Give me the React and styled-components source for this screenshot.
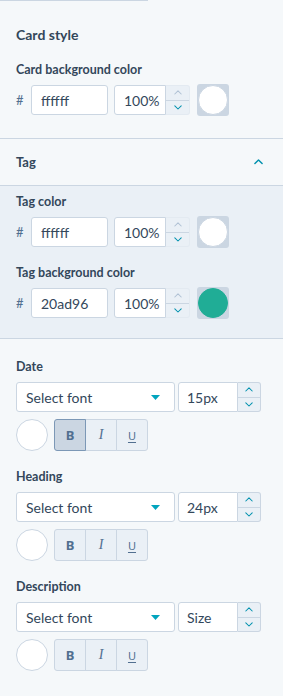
import React from "react";
import styled, { createGlobalStyle, css } from "styled-components";

const Global = createGlobalStyle`
  html, body { margin: 0; padding: 0; background: #f5f8fa; }
  body { font-family: Lato, "Noto Sans", sans-serif; color: #33475b; }
  * { box-sizing: border-box; }
`;

const Panel = styled.div`
  width: 283px;
  min-height: 696px;
  background: #f5f8fa;
  display: flex;
  flex-direction: column;
`;

const TopRule = styled.div`
  width: 148px;
  height: 1px;
  background: #cbd6e2;
`;

const Section = styled.section`
  display: flex;
  flex-direction: column;
  padding: ${(p) => p.$pad};
  background: ${(p) => (p.$tinted ? "#eaf0f6" : "#f5f8fa")};
  border-bottom: ${(p) => (p.$border ? "1px solid #cbd6e2" : "none")};
  gap: ${(p) => p.$gap || "18px"};
`;

const SectionTitle = styled.h2`
  margin: 0;
  font-size: 14px;
  line-height: 20px;
  font-weight: 700;
`;

const AccordionHeader = styled.div`
  height: 47px;
  padding: 0 20px 0 16px;
  display: flex;
  align-items: center;
  justify-content: space-between;
  border-bottom: 1px solid #cbd6e2;
  font-size: 13px;
  font-weight: 700;
`;

const Field = styled.div`
  display: flex;
  flex-direction: column;
  gap: ${(p) => p.$gap || "7px"};
`;

const Label = styled.div`
  font-size: 12.5px;
  line-height: 16px;
  font-weight: 700;
`;

const ColorRow = styled.div`
  display: flex;
  align-items: center;
  height: 30px;
`;

const Hash = styled.span`
  width: 15px;
  font-size: 13px;
  color: #516f90;
`;

const TextBox = styled.div`
  height: ${(p) => p.$h || "30px"};
  width: ${(p) => p.$w};
  background: #fff;
  border: 1px solid #cbd6e2;
  border-radius: 3px;
  display: flex;
  align-items: center;
  padding-left: ${(p) => p.$pl || "9px"};
  font-size: 14px;
  color: #33475b;
  margin-right: ${(p) => p.$mr || "0"};
  ${(p) =>
    p.$joined &&
    css`
      border-top-right-radius: 0;
      border-bottom-right-radius: 0;
    `}
`;

const Spinner = styled.div`
  width: ${(p) => p.$w || "24px"};
  height: ${(p) => p.$h || "30px"};
  display: flex;
  flex-direction: column;
  background: #eaf0f6;
  border: 1px solid ${(p) => (p.$framed ? "#cbd6e2" : "#e3eaf1")};
  border-left: none;
  border-radius: 0 3px 3px 0;
  margin-right: ${(p) => p.$mr || "0"};
`;

const SpinHalf = styled.div`
  flex: 1;
  display: flex;
  align-items: center;
  justify-content: center;
  & + & {
    border-top: 1px solid #cbd6e2;
  }
`;

const Swatch = styled.div`
  width: 32px;
  height: 32px;
  border-radius: 3px;
  background: #cbd6e2;
  display: flex;
  align-items: center;
  justify-content: center;
`;

const Dot = styled.div`
  width: ${(p) => p.$size || "30px"};
  height: ${(p) => p.$size || "30px"};
  border-radius: 50%;
  background: ${(p) => p.$color};
  border: 1px solid ${(p) => (p.$color === "#fff" ? "#cbd6e2" : p.$color)};
`;

const FontRow = styled.div`
  display: flex;
  align-items: center;
  height: 30px;
`;

const Select = styled.div`
  width: 159px;
  height: 30px;
  background: #fff;
  border: 1px solid #cbd6e2;
  border-radius: 3px;
  display: flex;
  align-items: center;
  justify-content: space-between;
  padding: 0 14px 0 9px;
  font-size: 14px;
  margin-right: 3px;
`;

const StyleRow = styled.div`
  display: flex;
  align-items: center;
  gap: 6px;
`;

const BtnGroup = styled.div`
  display: flex;
`;

const StyleBtn = styled.div`
  width: 32px;
  height: 32px;
  display: flex;
  align-items: center;
  justify-content: center;
  background: ${(p) => (p.$active ? "#cbd6e2" : "#eaf0f6")};
  border: 1px solid ${(p) => (p.$active ? "#7c98b6" : "#cbd6e2")};
  color: #516f90;
  font-size: 12px;
  &:first-child { border-radius: 3px 0 0 3px; }
  &:last-child { border-radius: 0 3px 3px 0; }
  & + & { margin-left: -1px; }
  ${(p) =>
    p.$active &&
    css`
      position: relative;
      z-index: 1;
    `}
`;

const BoldGlyph = styled.span`
  font-family: "Noto Sans", sans-serif;
  font-weight: 700;
  font-size: 13px;
`;

const ItalicGlyph = styled.span`
  font-family: "Liberation Serif", serif;
  font-style: italic;
  font-size: 14px;
`;

const UnderGlyph = styled.span`
  font-family: "Noto Sans", sans-serif;
  font-size: 11px;
  text-decoration: underline;
  text-underline-offset: 2px;
`;

const Chevron = ({ up, color = "#0091ae", w = 9, sw = 1.6 }) => (
  <svg width={w} height={w * 0.6} viewBox="0 0 10 6" fill="none">
    <polyline
      points={up ? "1,5 5,1 9,5" : "1,1 5,5 9,1"}
      stroke={color}
      strokeWidth={sw}
      strokeLinecap="round"
      strokeLinejoin="round"
    />
  </svg>
);

const Caret = () => (
  <svg width="9" height="5" viewBox="0 0 9 5">
    <polygon points="0,0 9,0 4.5,5" fill="#00a4bd" />
  </svg>
);

const Stepper = ({ w, h, framed, mr, upDisabled }) => (
  <Spinner $w={w} $h={h} $framed={framed} $mr={mr}>
    <SpinHalf>
      <Chevron up color={upDisabled ? "#b0c1d4" : "#0091ae"} w={8} sw={1.3} />
    </SpinHalf>
    <SpinHalf>
      <Chevron color="#0091ae" w={8} sw={1.3} />
    </SpinHalf>
  </Spinner>
);

const ColorField = ({ label, hex, color }) => (
  <Field>
    <Label>{label}</Label>
    <ColorRow>
      <Hash>#</Hash>
      <TextBox $w="77px" $mr="6px">{hex}</TextBox>
      <TextBox $w="52px" $joined>100%</TextBox>
      <Stepper w="24px" mr="7px" upDisabled />
      <Swatch>
        <Dot $color={color} />
      </Swatch>
    </ColorRow>
  </Field>
);

const TypeField = ({ label, size, active }) => (
  <Field>
    <Label>{label}</Label>
    <FontRow>
      <Select>
        <span>Select font</span>
        <Caret />
      </Select>
      <TextBox $w="60px" $joined $pl="8px">{size}</TextBox>
      <Stepper w="23px" framed />
    </FontRow>
    <StyleRow>
      <Dot $color="#fff" $size="32px" />
      <BtnGroup>
        <StyleBtn $active={active}>
          <BoldGlyph>B</BoldGlyph>
        </StyleBtn>
        <StyleBtn>
          <ItalicGlyph>I</ItalicGlyph>
        </StyleBtn>
        <StyleBtn>
          <UnderGlyph>U</UnderGlyph>
        </StyleBtn>
      </BtnGroup>
    </StyleRow>
  </Field>
);

export default function App() {
  return (
    <Panel>
      <Global />
      <TopRule />
      <Section $pad="24px 16px 23px" $border $gap="17px">
        <SectionTitle>Card style</SectionTitle>
        <ColorField label="Card background color" hex="ffffff" color="#fff" />
      </Section>
      <AccordionHeader>
        <span>Tag</span>
        <Chevron up />
      </AccordionHeader>
      <Section $pad="8px 16px 20px" $tinted $border>
        <ColorField label="Tag color" hex="ffffff" color="#fff" />
        <ColorField label="Tag background color" hex="20ad96" color="#20ad96" />
      </Section>
      <Section $pad="20px 16px" $gap="18px">
        <TypeField label="Date" size="15px" active />
        <TypeField label="Heading" size="24px" />
        <TypeField label="Description" size="Size" />
      </Section>
    </Panel>
  );
}
